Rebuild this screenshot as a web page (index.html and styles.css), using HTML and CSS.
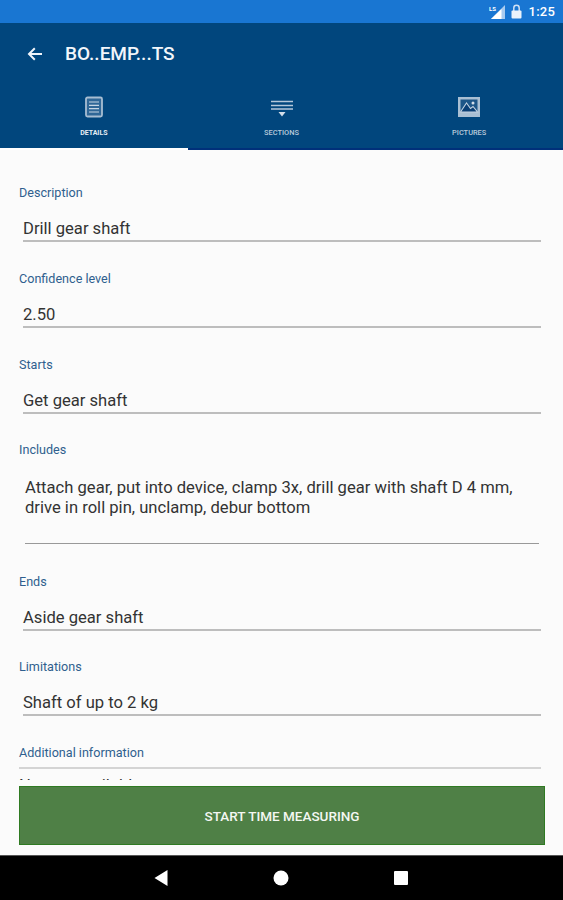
FILE: index.html
```html
<!DOCTYPE html>
<html lang="en">
<head>
<meta charset="utf-8">
<title>Details</title>
<link rel="stylesheet" href="styles.css">
</head>
<body>
<div class="app">
  <div class="status">
    <svg class="st-signal" width="17" height="14" viewBox="0 0 17 14"><path d="M16 0v14H2z" fill="#a9cbef"/><path d="M12.5 4v10H2z" fill="#fff"/><rect x="0" y="0" width="8" height="6.5" fill="#1976d2"/><text x="0" y="6" class="st-lte">LS</text></svg>
    <svg class="st-lock" width="11" height="15" viewBox="0 0 11 15"><path d="M2.8 7V4a2.7 2.7 0 0 1 5.4 0v3" fill="none" stroke="#cfe0f4" stroke-width="1.5"/><rect x="0.5" y="6.5" width="10" height="8" rx="1" fill="#eaf2fb"/></svg>
    <span class="st-time">1:25</span>
  </div>
  <header class="topbar">
    <div class="titlebar">
      <svg class="back" width="18" height="18" viewBox="0 0 18 18"><path d="M16 9H3.5M8.8 3.2 3 9l5.8 5.8" fill="none" stroke="#f0f4fa" stroke-width="2"/></svg>
      <span class="title">BO..EMP...TS</span>
    </div>
    <nav class="tabs">
      <div class="tab active">
        <svg width="20" height="22" viewBox="0 0 20 22"><rect x="2" y="1.5" width="16" height="19" rx="1.5" fill="#2f6797" stroke="#a7bdd2" stroke-width="1.8"/><path d="M5 6h10M5 9.3h10M5 12.6h10M5 16h10" stroke="#c6d5e3" stroke-width="1.2"/></svg>
        <span class="tab-label">Details</span>
      </div>
      <div class="tab">
        <svg width="24" height="22" viewBox="0 0 24 22"><path d="M1 5.5h22M1 9.5h22M1 13h22" stroke="#b5c8da" stroke-width="1.6"/><path d="M8.5 16h7L12 20.5z" fill="#d3deE9"/></svg>
        <span class="tab-label">Sections</span>
      </div>
      <div class="tab">
        <svg width="24" height="22" viewBox="0 0 24 22"><rect x="1" y="1" width="22" height="20" fill="#a9bfd3"/><rect x="3.5" y="3.5" width="17" height="12.5" fill="#1d5688"/><path d="M3.5 16l6-9 4 5.5 2.5-2 4.5 5.5z" fill="#0a3f75" stroke="#c3d2e1" stroke-width="1.1"/><circle cx="16" cy="7" r="1.5" fill="#d3deE9"/></svg>
        <span class="tab-label">Pictures</span>
      </div>
    </nav>
  </header>
  <main class="form">
    <div class="field">
      <div class="label">Description</div>
      <div class="value">Drill gear shaft</div>
    </div>
    <div class="field">
      <div class="label">Confidence level</div>
      <div class="value">2.50</div>
    </div>
    <div class="field field-short">
      <div class="label">Starts</div>
      <div class="value">Get gear shaft</div>
    </div>
    <div class="field field-multi">
      <div class="label">Includes</div>
      <div class="value multi">Attach gear, put into device, clamp 3x, drill gear with shaft D 4 mm, drive in roll pin, unclamp, debur bottom</div>
    </div>
    <div class="field field-short">
      <div class="label">Ends</div>
      <div class="value">Aside gear shaft</div>
    </div>
    <div class="field">
      <div class="label">Limitations</div>
      <div class="value">Shaft of up to 2 kg</div>
    </div>
    <div class="field">
      <div class="label">Additional information</div>
      <div class="rule"></div>
      <div class="value bare">Not yet available</div>
    </div>
  </main>
  <div class="action">
    <button class="start" type="button">START TIME MEASURING</button>
  </div>
  <footer class="navbar">
    <svg width="14" height="16" viewBox="0 0 14 16"><path d="M13.5 0v16L.5 8z" fill="#fff"/></svg>
    <svg width="16" height="16" viewBox="0 0 16 16"><circle cx="8" cy="8" r="7.5" fill="#fff"/></svg>
    <svg width="14" height="14" viewBox="0 0 14 14"><rect width="14" height="14" rx="1" fill="#fff"/></svg>
  </footer>
</div>
</body>
</html>
```
FILE: styles.css
```css
* { box-sizing: border-box; }
html, body { margin: 0; padding: 0; }
body { font-family: Roboto, "Liberation Sans", sans-serif; background: #fbfbfb; }
.app { width: 563px; height: 900px; display: flex; flex-direction: column; overflow: hidden; }

.status { height: 23px; flex: none; background: #1976d2; display: flex; align-items: center; justify-content: flex-end; padding-right: 8px; color: #fff; }
.st-signal { margin-right: 5px; }
.st-lte { font-size: 6px; font-weight: 700; fill: #fff; }
.st-lock { margin-right: 7px; }
.st-time { font-size: 13px; font-weight: 500; letter-spacing: .2px; }

.topbar { height: 127px; flex: none; background: #01467d; border-bottom: 2px solid #00307a; display: flex; flex-direction: column; }
.titlebar { height: 62px; display: flex; align-items: center; padding: 0 0 1px 26px; }
.back { margin-right: 21px; }
.title { color: #f2f6fb; font-size: 19px; font-weight: 500; }
.tabs { flex: 1; display: flex; }
.tab { flex: 1; display: flex; flex-direction: column; align-items: center; padding-top: 11px; margin-bottom: -2px; border-bottom: 2px solid transparent; }
.tab.active { border-bottom-color: #fff; }
.tab svg { display: block; }
.tab-label { margin-top: 10px; font-size: 7.4px; line-height: 9px; font-weight: 500; text-transform: uppercase; color: #b9cadb; }
.tab.active .tab-label { margin-top: 11px; color: #e8eef5; font-weight: 700; font-size: 7px; }

.form { flex: 1; min-height: 0; overflow: hidden; background: #fbfbfb; padding: 36px 22px 0 19px; }
.field { height: 86px; }
.field-short { height: 85px; }
.field-multi { height: 132px; }
.label { font-size: 12.6px; line-height: 13px; color: #2f5f8e; }
.value { margin-top: 18px; margin-left: 4px; height: 25px; font-size: 16.6px; line-height: 24px; color: #333; border-bottom: 2px solid #bdbdbd; }
.multi { margin-top: 22px; margin-left: 6px; margin-right: 2px; height: 66px; line-height: 20px; border-bottom-width: 1px; border-bottom-color: #999; }
.rule { margin-top: 8px; height: 2px; background: #d4d4d4; }
.bare { border-bottom: 0; margin-top: 5px; margin-left: 0; }

.action { flex: none; padding: 6px 18px 10px 19px; background: #fbfbfb; }
.start { display: block; width: 100%; height: 59px; border: 1px solid #2f7a22; border-radius: 0; background: #4f8046; color: #f4f7f2; font-family: inherit; font-size: 13.5px; font-weight: 500; }

.navbar { height: 45px; flex: none; background: #000; border-top: 1px solid #555; display: flex; align-items: center; justify-content: center; gap: 105px; padding-right: 2px; }
```
